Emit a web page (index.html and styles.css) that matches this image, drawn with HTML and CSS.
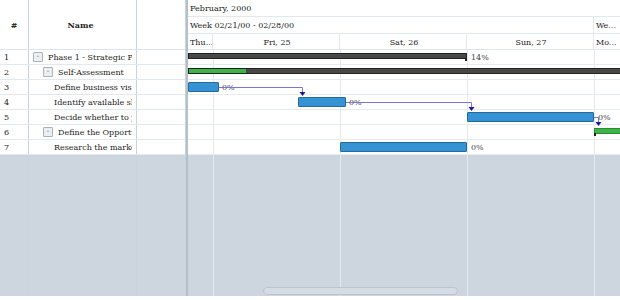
FILE: index.html
```html
<!DOCTYPE html>
<html lang="en">
<head>
    <meta charset="UTF-8">
    <title>Gantt</title>
    <link rel="stylesheet" href="styles.css">
</head>
<body>
    <div class="gantt">
        <div class="grid">
            <div class="grid-head">
                <div class="c-num">#</div>
                <div class="c-name">Name</div>
                <div class="c-extra"></div>
            </div>
            <div class="grid-row">
                <div class="c-num">1</div>
                <div class="c-name lvl0"><span class="toggle">-</span><span class="txt">Phase 1 - Strategic Plan</span></div>
                <div class="c-extra"></div>
            </div>
            <div class="grid-row">
                <div class="c-num">2</div>
                <div class="c-name lvl1"><span class="toggle">-</span><span class="txt">Self-Assessment</span></div>
                <div class="c-extra"></div>
            </div>
            <div class="grid-row">
                <div class="c-num">3</div>
                <div class="c-name leaf"><span class="txt">Define business vision</span></div>
                <div class="c-extra"></div>
            </div>
            <div class="grid-row">
                <div class="c-num">4</div>
                <div class="c-name leaf"><span class="txt">Identify available skills</span></div>
                <div class="c-extra"></div>
            </div>
            <div class="grid-row">
                <div class="c-num">5</div>
                <div class="c-name leaf"><span class="txt">Decide whether to proceed</span></div>
                <div class="c-extra"></div>
            </div>
            <div class="grid-row">
                <div class="c-num">6</div>
                <div class="c-name lvl1"><span class="toggle">-</span><span class="txt">Define the Opportunity</span></div>
                <div class="c-extra"></div>
            </div>
            <div class="grid-row">
                <div class="c-num">7</div>
                <div class="c-name leaf"><span class="txt">Research the market</span></div>
                <div class="c-extra"></div>
            </div>
            <div class="grid-row filler">
                <div class="c-num"></div>
                <div class="c-name"></div>
                <div class="c-extra"></div>
            </div>
        </div>

        <div class="splitter"></div>

        <div class="chart">
            <div class="chart-head">
                <div class="scale"><div class="cell wide">February, 2000</div></div>
                <div class="scale">
                    <div class="cell week">Week 02/21/00 - 02/28/00</div>
                    <div class="cell">We...</div>
                </div>
                <div class="scale days">
                    <div class="cell part">Thu...</div>
                    <div class="cell day">Fri, 25</div>
                    <div class="cell day">Sat, 26</div>
                    <div class="cell day">Sun, 27</div>
                    <div class="cell">Mo...</div>
                </div>
            </div>
            <div class="chart-body">
                <div class="chart-row">
                    <div class="bar summary" style="left:0;width:279px"><div class="done" style="width:0"></div></div>
                    <span class="pct" style="left:283px">14%</span>
                </div>
                <div class="chart-row">
                    <div class="bar summary open" style="left:0;width:460px"><div class="done green" style="width:57px"></div></div>
                </div>
                <div class="chart-row">
                    <div class="bar task" style="left:0;width:31px"></div>
                    <span class="pct" style="left:34px">0%</span>
                </div>
                <div class="chart-row">
                    <div class="bar task" style="left:110px;width:48px"></div>
                    <span class="pct" style="left:161px">0%</span>
                </div>
                <div class="chart-row">
                    <div class="bar task" style="left:279px;width:127px"></div>
                    <span class="pct" style="left:410px">0%</span>
                </div>
                <div class="chart-row">
                    <div class="bar summary green-bar" style="left:406px;width:40px"></div>
                </div>
                <div class="chart-row">
                    <div class="bar task" style="left:152px;width:127px"></div>
                    <span class="pct" style="left:283px">0%</span>
                </div>
                <div class="chart-filler"></div>

                <!-- dependency links -->
                <svg class="links" width="432" height="245">
                    <path d="M31 37.5 H114.5 V42" />
                    <path d="M158 52.5 H283.5 V57" />
                    <path d="M406 67.5 H410.5 V72" />
                    <polygon points="111.5,42 117.5,42 114.5,46" />
                    <polygon points="280.5,57 286.5,57 283.5,61" />
                    <polygon points="407.5,72 413.5,72 410.5,76" />
                </svg>
                <div class="hscroll"></div>
            </div>
        </div>
    </div>
</body>
</html>
```

FILE: styles.css
```css
body { margin: 0; font-family: "DejaVu Serif", serif; font-size: 8px; color: #222; background: #fff; }
.gantt { display: flex; width: 620px; height: 296px; overflow: hidden; background: #cdd6df; }

/* left grid */
.grid { width: 185px; display: flex; flex-direction: column; }
.grid-head, .grid-row { display: flex; flex: none; }
.grid-head { height: 50px; background: #fff; border-bottom: 1px solid #dce3ea; box-sizing: border-box; }
.grid-row { height: 15px; background: #fff; border-bottom: 1px solid #e2e8ee; box-sizing: border-box; }
.grid-row.filler { flex: 1; background: transparent; border-bottom: 0; }
.c-num, .c-name, .c-extra { border-right: 1px solid #c6d3e0; box-sizing: border-box; display: flex; align-items: center; overflow: hidden; white-space: nowrap; }
.c-num { width: 29px; padding-left: 4px; }
.c-name { width: 108px; padding-right: 4px; }
.c-name .txt { overflow: hidden; min-width: 0; }
.c-extra { width: 48px; border-right: 0; }
.grid-head .c-num { justify-content: center; padding: 0; font-weight: bold; }
.grid-head .c-name { justify-content: center; font-weight: bold; }
.lvl0 { padding-left: 4px; }
.lvl1 { padding-left: 14px; }
.leaf { padding-left: 25px; }
.toggle { width: 8px; height: 8px; border: 1px solid #aab3bc; border-radius: 1px; background: #eceff2; font-size: 7px; line-height: 7px; text-align: center; margin-right: 5px; color: #555; flex: none; }

.splitter { width: 3px; background: #b3c0cc; border-left: 1px solid #c8d3dd; box-sizing: border-box; }

/* timeline */
.chart { flex: 1; display: flex; flex-direction: column; min-width: 0; }
.chart-head { height: 50px; background: #fff; flex: none; border-bottom: 1px solid #dde4ea; box-sizing: border-box; }
.scale { display: flex; height: 16px; border-bottom: 1px solid #e3e8ed; }
.scale.days { height: 16px; border-bottom: 0; }
.cell { flex: none; display: flex; align-items: center; padding-left: 2px; box-sizing: border-box; white-space: nowrap; overflow: hidden; }
.cell.wide { width: 100%; }
.cell.week { width: 406px; border-right: 1px solid #e3e8ed; }
.cell.part { width: 25px; border-right: 1px solid #e3e8ed; }
.cell.day { width: 127px; justify-content: center; border-right: 1px solid #e3e8ed; }

.chart-body { flex: 1; position: relative; display: flex; flex-direction: column; }
.chart-row, .chart-filler {
    background-image: repeating-linear-gradient(90deg, #e4e9ee 0 1px, transparent 1px 127px);
    background-position: 25px 0;
}
.chart-row { height: 15px; flex: none; position: relative; background-color: #fff; border-bottom: 1px solid #e6ebf0; box-sizing: border-box; }
.chart-filler { flex: 1; }

.bar { position: absolute; box-sizing: border-box; }
.task { top: 2px; height: 10px; background: #3592d3; border: 1px solid #236b9e; border-radius: 1px; }
.summary { top: 3px; height: 6px; background: #484848; border: 1px solid #222; }
.summary::after { content: ""; position: absolute; right: -1px; top: 4px; width: 2px; height: 3px; background: #222; }
.summary.open::after { display: none; }
.done { height: 100%; }
.done.green { background: #3bb548; }
.green-bar { background: #3bb548; border-color: #2b8a34; }
.green-bar::after { left: -1px; right: auto; }
.pct { position: absolute; top: 3px; line-height: 9px; color: #444; }

.links { position: absolute; left: 0; top: 0; }
.links path { fill: none; stroke: #7b76d6; stroke-width: 1; }
.links polygon { fill: #1b1b8f; }

.hscroll { position: absolute; left: 75px; bottom: 1px; width: 195px; height: 8px; border-radius: 4px; background: #d6dce3; border: 1px solid #bac4ce; box-sizing: border-box; }
```
